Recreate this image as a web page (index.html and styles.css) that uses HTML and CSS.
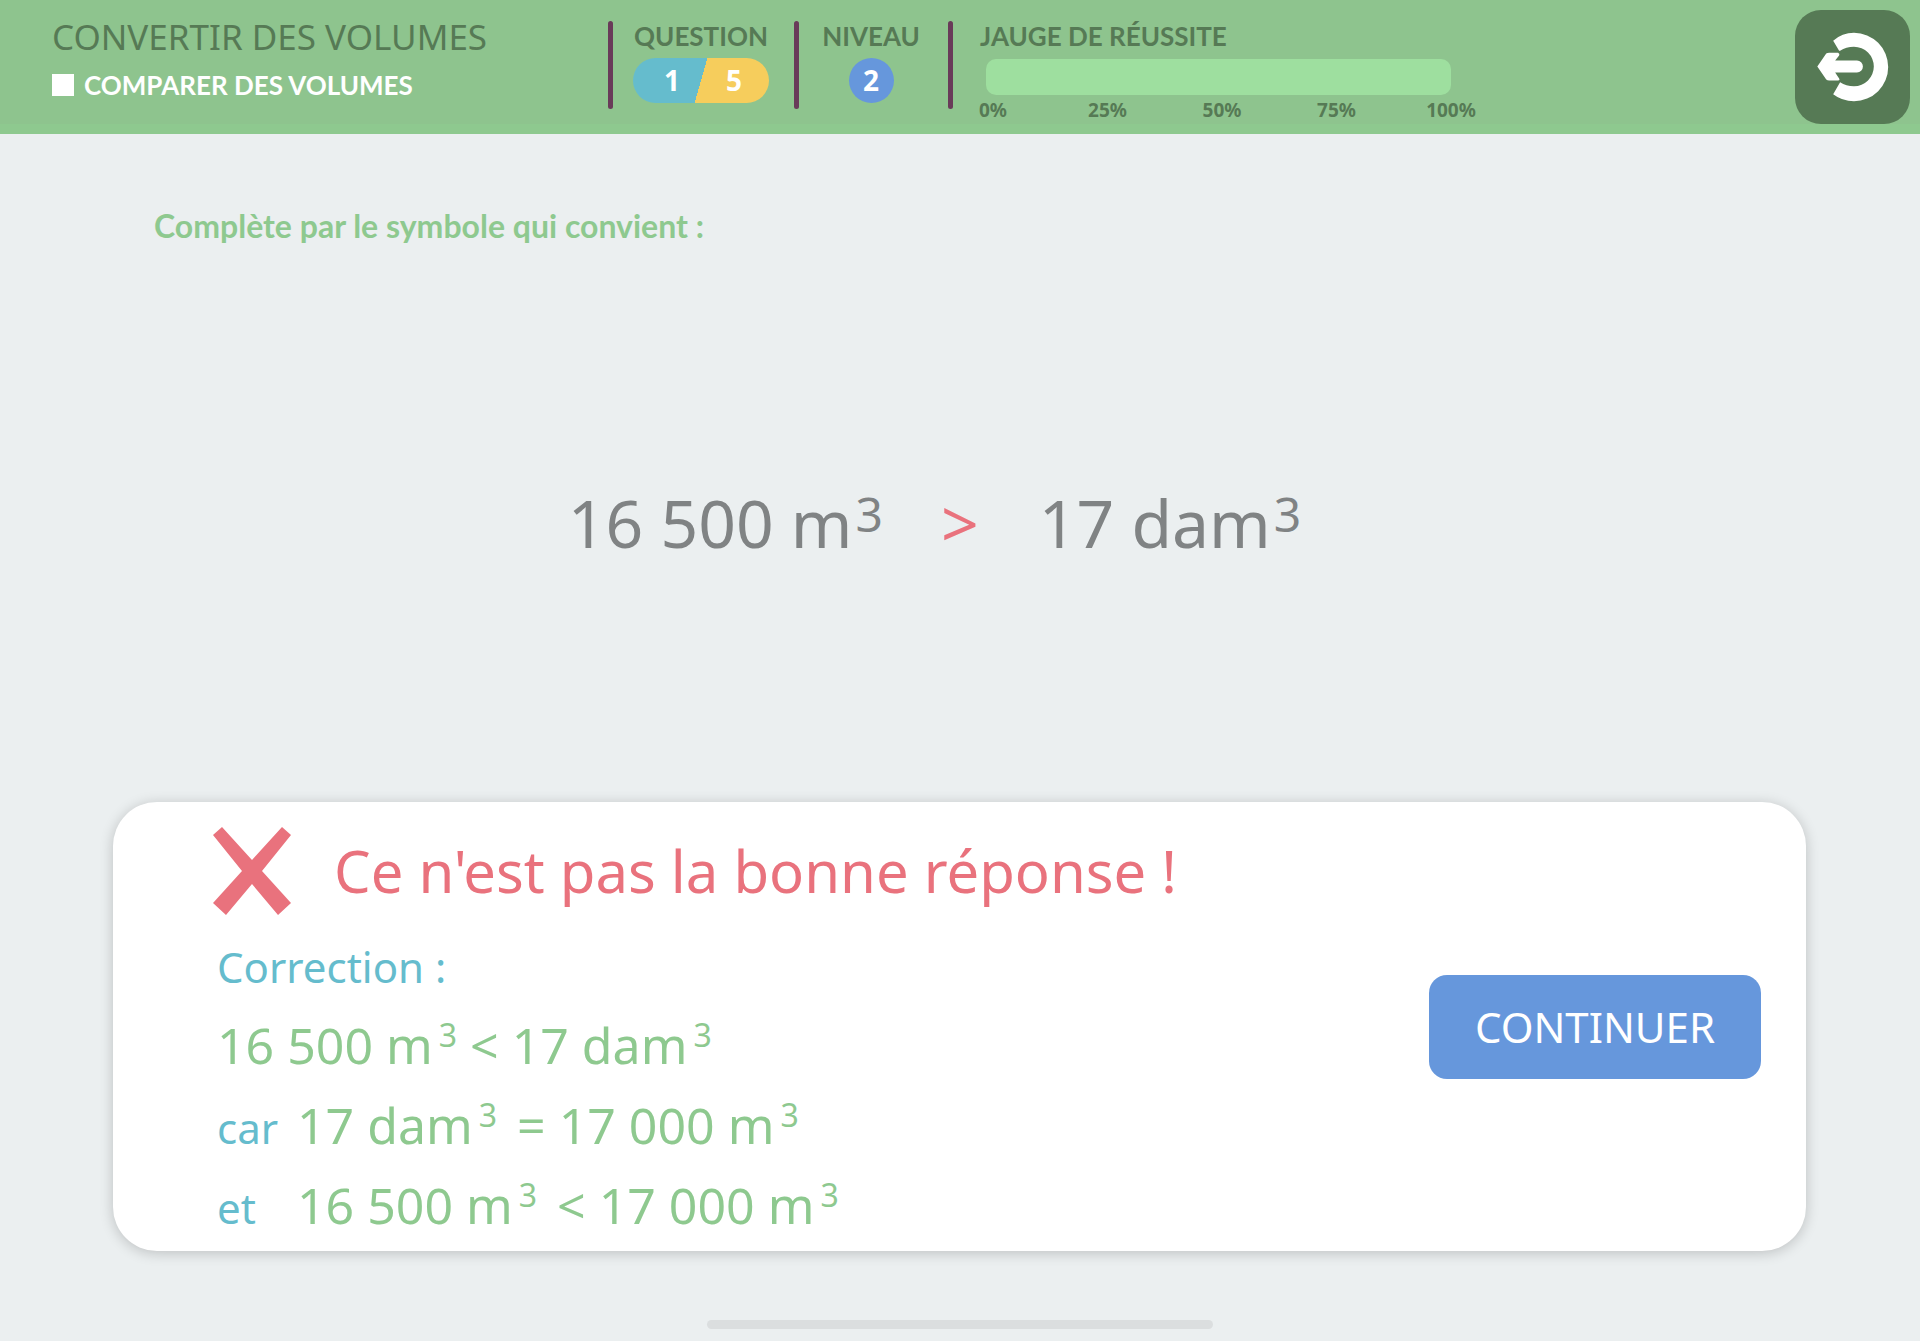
FILE: index.html
```html
<!DOCTYPE html>
<html lang="fr">

<head>
    <meta charset="UTF-8">
    <meta name="viewport" content="width=device-width, initial-scale=1.0">
    <title>Convertir des volumes</title>
    <link rel="stylesheet" href="styles.css">
</head>

<body>
    <header class="top-bar">
        <div class="titles">
            <h1 class="title">CONVERTIR DES VOLUMES</h1>
            <h2 class="subtitle"><span class="square"></span>COMPARER DES VOLUMES</h2>
        </div>

        <div class="stat question">
            <span class="stat-label">QUESTION</span>
            <div class="pill">
                <span class="pill-current">1</span>
                <span class="pill-total">5</span>
            </div>
        </div>

        <div class="stat level">
            <span class="stat-label">NIVEAU</span>
            <span class="level-badge">2</span>
        </div>

        <div class="stat gauge">
            <label class="stat-label" for="gauge">JAUGE DE RÉUSSITE</label>
            <progress class="gauge-bar" id="gauge" value="0" max="100"></progress>
            <div class="gauge-ticks">
                <span>0%</span>
                <span>25%</span>
                <span>50%</span>
                <span>75%</span>
                <span>100%</span>
            </div>
        </div>

        <button type="button" class="exit-button" aria-label="Quitter">
            <svg viewBox="0 0 115 115" aria-hidden="true">
                <path d="M44 41 L38 31 Q47 23 59 23 A34 34 0 0 1 59 92 Q47 92 38 85 L45 73 Q51 77 59 77 A20 20 0 0 0 59 37 Q51 37 45 41 Z" fill="#fff" />
                <path d="M22 57 L31 44 Q32 43 34 43 L43 43 Q45 44 44 46 L40 51 L62 51 A6 6 0 0 1 62 63 L40 63 L44 69 Q45 71 43 71 L34 71 Q32 71 31 70 Z" fill="#fff" />
            </svg>
        </button>
    </header>

    <main class="exercise">
        <p class="instruction">Complète par le symbole qui convient :</p>

        <div class="equation">
            <span class="term">16 500 m<sup>3</sup></span>
            <span class="answer">&gt;</span>
            <span class="term">17 dam<sup>3</sup></span>
        </div>

        <section class="feedback">
            <div class="feedback-text">
                <div class="verdict">
                    <svg class="cross" viewBox="0 0 78 88" aria-hidden="true">
                        <path d="M0 8 L9 0 L39 33 L69 0 L78 8 L49 44 L78 76 L65 88 L39 57 L13 88 L0 76 L29 44 Z" fill="#e9727d" />
                    </svg>
                    <h3 class="verdict-title">Ce n'est pas la bonne réponse !</h3>
                </div>
                <p class="correction">Correction :</p>
                <p class="line">16 500 m<sup>3</sup><span class="sign">&lt;</span>17 dam<sup>3</sup></p>
                <p class="line line-detail"><span class="link-word">car</span>17 dam<sup>3</sup><span class="sign">=</span>17 000 m<sup>3</sup></p>
                <p class="line line-detail"><span class="link-word">et</span>16 500 m<sup>3</sup><span class="sign">&lt;</span>17 000 m<sup>3</sup></p>
            </div>
            <button type="button" class="continue-button">CONTINUER</button>
        </section>
    </main>

    <div class="home-indicator"></div>
</body>

</html>
```

FILE: styles.css
```css
* {
    box-sizing: border-box;
}

body {
    margin: 0;
    min-height: 100vh;
    display: flex;
    flex-direction: column;
    background: #ebeff0;
    font-family: "Noto Sans", "Open Sans", sans-serif;
}

h1, h2, h3, p {
    margin: 0;
    font-weight: normal;
}

button {
    border: none;
    padding: 0;
    font-family: inherit;
    cursor: pointer;
}

/* Header */
.top-bar {
    display: flex;
    align-items: flex-start;
    height: 134px;
    padding: 10px 10px 0 52px;
    background: linear-gradient(#8ec48e 124px, #8ec98f 124px);
    color: #567a55;
}

.titles {
    width: 556px;
}

.title {
    padding-top: 4px;
    font-size: 35px;
    line-height: 46px;
}

.subtitle {
    display: flex;
    align-items: center;
    gap: 10px;
    padding-top: 7px;
    color: #fff;
    font-family: Lato, sans-serif;
    font-size: 26px;
    font-weight: bold;
    line-height: 36px;
}

.square {
    width: 22px;
    height: 22px;
    background: #fff;
}

.stat {
    display: flex;
    flex-direction: column;
    position: relative;
    padding-top: 6px;
    font-family: Lato, sans-serif;
    font-weight: bold;
}

/* Purple separator on the left of each block */
.stat::before {
    content: '';
    position: absolute;
    top: 11px;
    left: 0;
    width: 5px;
    height: 88px;
    border-radius: 3px;
    background: #693b59;
}

.stat-label {
    margin-bottom: 2px;
    font-size: 26px;
    line-height: 40px;
}

.question {
    align-items: center;
    width: 186px;
}

.pill {
    display: flex;
    width: 136px;
    height: 45px;
    padding: 0 4px 0 8px;
    border-radius: 23px;
    background: linear-gradient(106deg, #65bccd 50%, #f6cd5c 50%);
}

.pill span {
    flex: 1;
    text-align: center;
}

.pill span,
.level-badge {
    color: #fff;
    font-family: "Open Sans", sans-serif;
    font-size: 28px;
    line-height: 45px;
}

.level {
    align-items: center;
    width: 154px;
}

.level-badge {
    width: 45px;
    height: 45px;
    border-radius: 50%;
    background: #6697dc;
    text-align: center;
}

.gauge {
    width: 520px;
    padding-left: 32px;
}

.gauge-bar {
    appearance: none;
    width: 465px;
    height: 36px;
    margin: 1px 0 0 6px;
    border: none;
    border-radius: 10px;
    background: #9edf9f;
    overflow: hidden;
}

.gauge-bar::-webkit-progress-bar {
    background: #9edf9f;
}

.gauge-bar::-webkit-progress-value {
    background: #567a55;
}

.gauge-ticks {
    display: flex;
    justify-content: space-between;
    width: 514px;
    margin: 2px 0 0 -15px;
    font-family: "Noto Sans", sans-serif;
    font-size: 19px;
    line-height: 26px;
}

.gauge-ticks span {
    width: 56px;
    text-align: center;
}

.exit-button {
    width: 115px;
    height: 114px;
    margin-left: auto;
    border-radius: 26px;
    background: #567a55;
}

.exit-button svg {
    display: block;
    width: 100%;
    height: 100%;
}

/* Exercise */
.exercise {
    flex: 1;
    display: flex;
    flex-direction: column;
    padding: 72px 114px 0 113px;
}

.instruction {
    padding-left: 41px;
    color: #8ec98f;
    font-family: Lato, sans-serif;
    font-size: 32px;
    font-weight: bold;
    line-height: 40px;
}

sup {
    line-height: 0;
    vertical-align: baseline;
    position: relative;
}

.equation {
    display: flex;
    align-items: baseline;
    justify-content: center;
    padding: 231px 50px 0 0;
    color: #808384;
    font-size: 66px;
    line-height: 90px;
}

.equation sup {
    top: -16px;
    padding-left: 3px;
    font-size: 48px;
}

.answer {
    padding: 0 60px 0 58px;
    color: #e9727d;
}

/* Feedback card */
.feedback {
    display: flex;
    align-items: center;
    justify-content: space-between;
    margin-top: 235px;
    padding: 0 45px 0 100px;
    border-radius: 44px;
    background: #fff;
    box-shadow: 0 2px 14px rgba(0, 0, 0, 0.2);
}

.feedback-text {
    padding: 19px 0 6px;
}

.verdict {
    display: flex;
    align-items: center;
    gap: 43px;
    margin-bottom: 8px;
}

.cross {
    width: 78px;
    height: 88px;
}

.verdict-title {
    color: #e9727d;
    font-size: 58px;
    line-height: 100px;
}

.correction {
    padding-left: 4px;
    color: #65bccd;
    font-size: 42px;
    line-height: 76px;
}

.line {
    padding-left: 4px;
    color: #8ec98f;
    font-size: 50px;
    line-height: 80px;
}

.line sup {
    top: -17px;
    padding-left: 6px;
    font-size: 32px;
}

.sign {
    padding: 0 13px;
}

.line-detail .sign {
    padding-left: 20px;
}

.link-word {
    display: inline-block;
    width: 80px;
    color: #65bccd;
    font-size: 42px;
    line-height: 1;
}

.continue-button {
    width: 332px;
    height: 104px;
    border-radius: 18px;
    background: #6697dc;
    color: #fff;
    font-size: 42px;
}

.home-indicator {
    width: 506px;
    height: 9px;
    margin: 0 auto 12px;
    border-radius: 5px;
    background: #dbdedf;
}
```
